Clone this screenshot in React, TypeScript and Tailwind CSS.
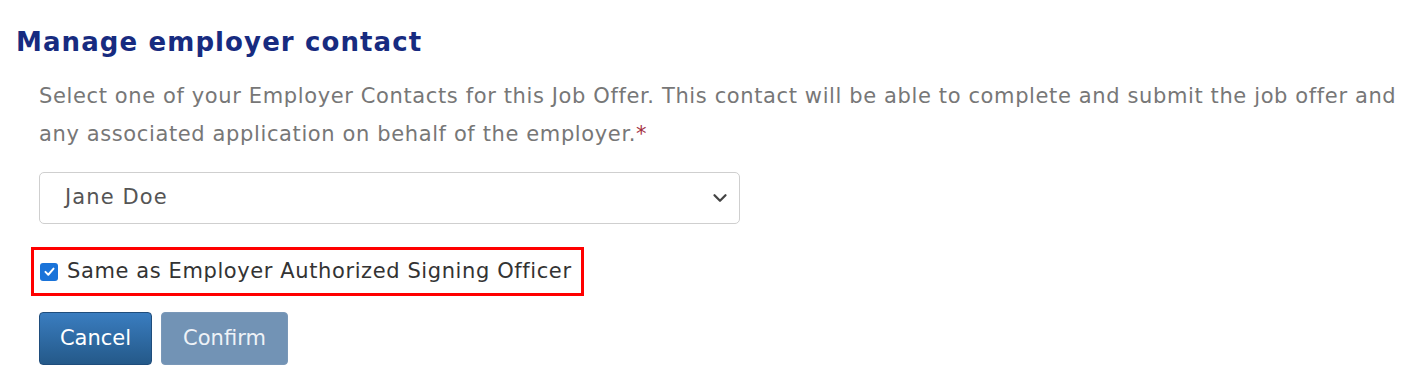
import { ChevronDown } from "lucide-react";

export default function App() {
  return (
    <div className="w-[1402px] h-[376px] bg-white font-['DejaVu_Sans',Verdana,sans-serif] overflow-hidden">
      <div className="pl-[16px] pt-[25px]">
        <h1 className="text-[26px] leading-[34px] font-bold text-[#172b80] tracking-[1.1px]">Manage employer contact</h1>

        <div className="pl-[23px] pt-[18px]">
          <p className="text-[21px] leading-[38px] text-[#777777] tracking-[0.62px] whitespace-nowrap">
            Select one of your Employer Contacts for this Job Offer. This contact will be able to complete and submit the job offer and
            <br />
            any associated application on behalf of the employer.<span className="text-[#a4303f]">*</span>
          </p>

          <div className="mt-[19px] w-[701px] h-[52px] border border-[#cfcfcf] rounded-[5px] flex items-center justify-between pl-[25px] pr-[8px]">
            <span className="text-[21px] text-[#555555] tracking-[1.1px]">Jane Doe</span>
            <ChevronDown className="w-[22px] h-[22px] text-[#444444]" strokeWidth={2.5} />
          </div>
        </div>

        <div className="ml-[15px] mt-[23px] w-[553px] h-[49px] border-[3px] border-[#ff0000] flex items-center pl-[6px] gap-[9px]">
          <span className="w-[18px] h-[18px] rounded-[3px] bg-[#1a73d9] flex items-center justify-center">
            <svg viewBox="0 0 16 16" className="w-[13px] h-[13px]">
              <path d="M3 8.5 L6.5 12 L13 4.5" fill="none" stroke="white" strokeWidth="2.4" strokeLinecap="round" strokeLinejoin="round" />
            </svg>
          </span>
          <span className="text-[21px] text-[#333333] tracking-[0.6px]">Same as Employer Authorized Signing Officer</span>
        </div>

        <div className="ml-[23px] mt-[16px] flex gap-[9px]">
          <button className="w-[113px] h-[53px] rounded-[4px] border border-[#1f4d7c] bg-gradient-to-b from-[#3a7dc0] to-[#245989] text-white text-[21px]">
            Cancel
          </button>
          <button className="w-[127px] h-[53px] rounded-[4px] border border-[#7a98b8] bg-[#7293b5] text-[#eef2f7] text-[21px]">
            Confirm
          </button>
        </div>
      </div>
    </div>
  );
}
